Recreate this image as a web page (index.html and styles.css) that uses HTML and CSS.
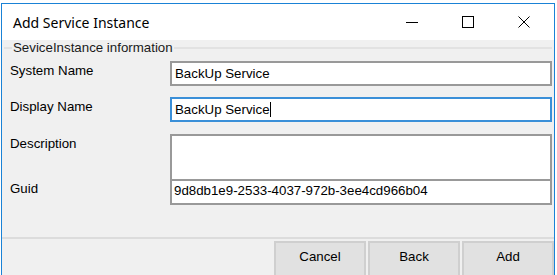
FILE: index.html
```html
<!DOCTYPE html>
<html>
<head>
<meta charset="utf-8">
<link rel="stylesheet" href="styles.css">
</head>
<body>
<div class="window">
  <div class="titlebar">
    <div class="title">Add Service Instance</div>
    <div class="controls">
      <span class="ctl"><svg width="12" height="12" viewBox="0 0 12 12"><path d="M0 6.5H12" stroke="#000" stroke-width="1"/></svg></span>
      <span class="ctl"><svg width="12" height="12" viewBox="0 0 12 12"><rect x="0.5" y="0.5" width="11" height="11" fill="none" stroke="#000" stroke-width="1"/></svg></span>
      <span class="ctl"><svg width="12" height="12" viewBox="0 0 12 12"><path d="M0.5 0.5L11.5 11.5M11.5 0.5L0.5 11.5" stroke="#000" stroke-width="1"/></svg></span>
    </div>
  </div>
  <div class="client">
    <div class="group">
      <div class="legend">SeviceInstance information</div>
      <div class="row r1">
        <div class="label">System Name</div>
        <div class="field">BackUp Service</div>
      </div>
      <div class="row r2">
        <div class="label">Display Name</div>
        <div class="field focus">BackUp Service<span class="caret"></span></div>
      </div>
      <div class="row r3">
        <div class="label">Description</div>
        <div class="field area"></div>
      </div>
      <div class="row r4">
        <div class="label">Guid</div>
        <div class="field guid">9d8db1e9-2533-4037-972b-3ee4cd966b04</div>
      </div>
    </div>
    <div class="footer">
      <button class="btn">Cancel</button>
      <button class="btn">Back</button>
      <button class="btn">Add</button>
    </div>
  </div>
</div>
</body>
</html>
```
FILE: styles.css
```css
html, body {
  margin: 0;
  padding: 0;
  background: #ffffff;
  width: 557px;
  height: 275px;
  overflow: hidden;
}
.window {
  margin: 3px 0 0 1px;
  width: 552px;
  height: 272px;
  border: 1px solid #1a82d6;
  border-bottom: none;
  background: #f0f0f0;
  display: flex;
  flex-direction: column;
  overflow: hidden;
}
.titlebar {
  flex: none;
  height: 36px;
  background: #ffffff;
  display: flex;
  align-items: center;
  justify-content: space-between;
}
.title {
  font-family: "Noto Sans", sans-serif;
  font-size: 14px;
  color: #000;
  padding-left: 11px;
  margin-top: 1px;
}
.controls {
  display: flex;
  margin-right: 2px;
}
.ctl {
  width: 56px;
  height: 30px;
  display: flex;
  align-items: center;
  justify-content: center;
  margin-top: -1px;
}
.client {
  flex: none;
  display: flex;
  flex-direction: column;
  font-family: "Liberation Sans", Arial, sans-serif;
  font-size: 13.3px;
  color: #000;
}
.group {
  flex: none;
  margin: 7px 2px 0 2px;
  border-top: 2px solid #e2e2e2;
  position: relative;
  padding-top: 12px;
  height: 167px;
}
.legend {
  position: absolute;
  top: -9px;
  left: 8px;
  background: #f0f0f0;
  padding: 0 1px 0 1px;
  color: #1a1a1a;
  line-height: 15px;
}
.row {
  display: flex;
  align-items: flex-start;
}
.label {
  width: 160px;
  padding-left: 6px;
  padding-top: 2px;
  line-height: 15px;
  flex: none;
}
.field {
  width: 378px;
  height: 21px;
  border: 2px solid #999999;
  background: #ffffff;
  line-height: 21px;
  padding-left: 3px;
  box-sizing: content-box;
  white-space: nowrap;
}
.r2 { margin-top: 11px; }
.r3 { margin-top: 12px; }
.r4 .label { padding-top: 0; }
.field.guid {
  padding-left: 2px;
  width: 379px;
  height: 22px;
  line-height: 20px;
  border-top: none;
}
.field.focus {
  border-color: #3a8fd8;
}
.field.area {
  height: 43px;
}
.caret {
  display: inline-block;
  width: 1px;
  height: 15px;
  background: #000;
  vertical-align: -3px;
}
.footer {
  flex: none;
  margin-top: 9px;
  border-top: 2px solid #dcdcdc;
  display: flex;
  justify-content: flex-end;
  gap: 2px;
  padding: 2px 0 0 0;
}
.btn {
  width: 92px;
  height: 40px;
  background: #e1e1e1;
  border: 2px solid #cfcfcf;
  font-family: "Liberation Sans", Arial, sans-serif;
  font-size: 13.3px;
  color: #000;
  padding: 0 0 10px 0;
  margin: 0;
}
```
